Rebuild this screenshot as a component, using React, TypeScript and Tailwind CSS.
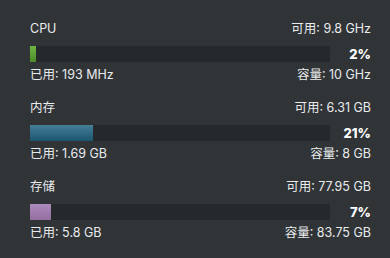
const rows = [
  { label: 'CPU', free: '可用: 9.8 GHz', used: '已用: 193 MHz', cap: '容量: 10 GHz', pct: 2, fill: 'bg-gradient-to-b from-[#6fb541] to-[#4b8a2a]' },
  { label: '内存', free: '可用: 6.31 GB', used: '已用: 1.69 GB', cap: '容量: 8 GB', pct: 21, fill: 'bg-gradient-to-b from-[#447f96] to-[#1b5570]' },
  { label: '存储', free: '可用: 77.95 GB', used: '已用: 5.8 GB', cap: '容量: 83.75 GB', pct: 7, fill: 'bg-gradient-to-b from-[#ad8abd] to-[#93709f]' },
];

export default function App() {
  return (
    <div
      className="w-[390px] h-[258px] bg-[#303437] text-[#eaebec] pl-[30px] pr-[19px] pt-[21px] flex flex-col gap-[17px] text-[12.5px] leading-4"
      style={{ fontFamily: 'Inter, "Noto Sans CJK SC", sans-serif' }}
    >
      {rows.map((r) => (
        <div key={r.label} className="flex flex-col">
          <div className="flex justify-between h-4">
            <span>{r.label}</span>
            <span>{r.free}</span>
          </div>
          <div className="flex items-center mt-[9px] h-4">
            <div className="w-[300px] h-4 bg-[#25292b]">
              <div className={`h-full ${r.fill}`} style={{ width: `${r.pct}%` }}></div>
            </div>
            <span className="flex-1 text-right font-extrabold text-white text-[13px]">{r.pct}%</span>
          </div>
          <div className="flex justify-between h-4 mt-[5px]">
            <span>{r.used}</span>
            <span>{r.cap}</span>
          </div>
        </div>
      ))}
    </div>
  );
}
